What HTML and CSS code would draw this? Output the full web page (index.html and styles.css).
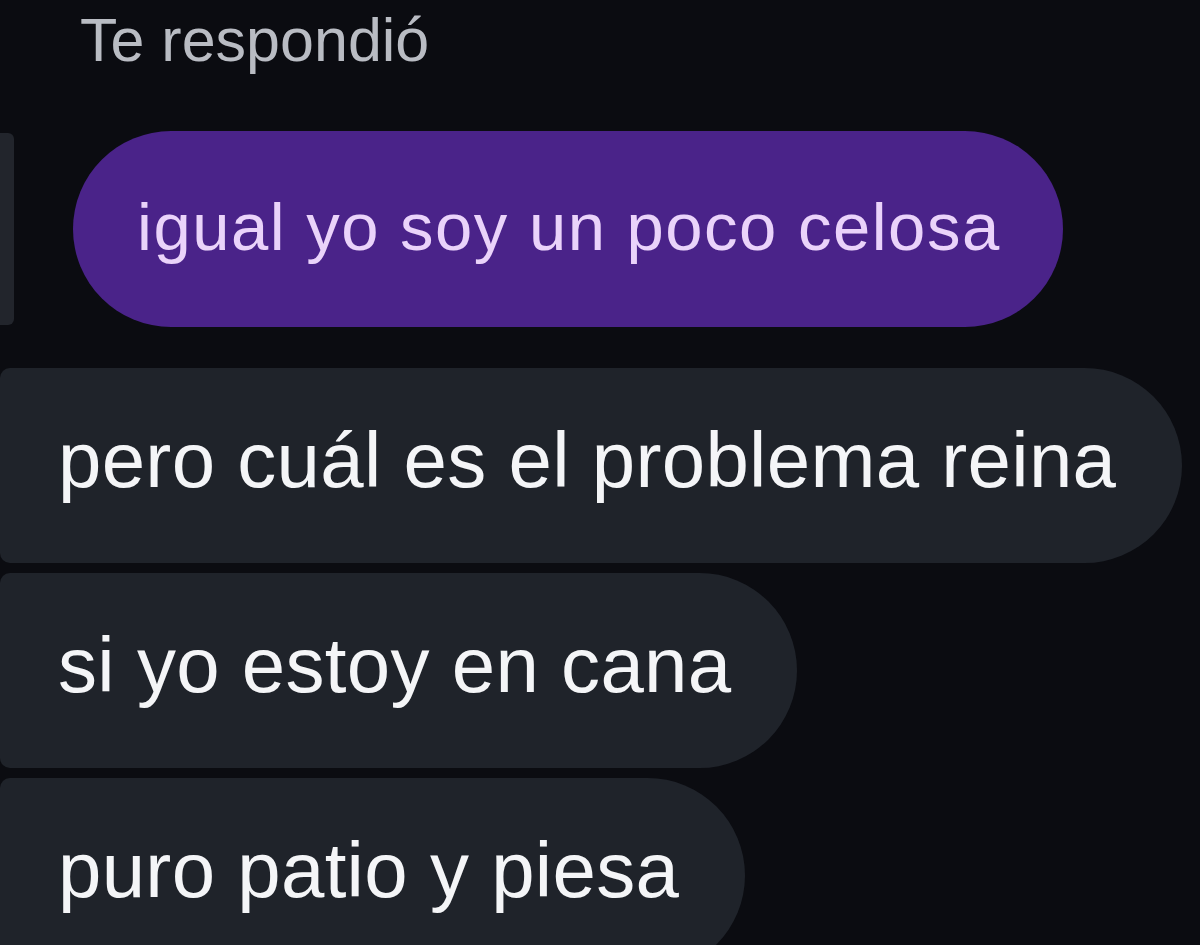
FILE: index.html
```html
<!DOCTYPE html>
<html lang="es">
<head>
    <meta charset="UTF-8">
    <meta name="viewport" content="width=device-width, initial-scale=1.0">
    <title>Te respondió</title>
    <link rel="stylesheet" href="styles.css">
</head>
<body>
    <div class="chat">
        <div class="reply-label">Te respondió</div>

        <div class="reply-row">
            <div class="reply-bar"></div>
            <div class="bubble-mine">igual yo soy un poco celosa</div>
        </div>

        <div class="thread">
            <div class="bubble-theirs">pero cuál es el problema reina</div>
            <div class="bubble-theirs">si yo estoy en cana</div>
            <div class="bubble-theirs">puro patio y piesa</div>
        </div>
    </div>
</body>
</html>
```

FILE: styles.css
```css
html, body {
    margin: 0;
    padding: 0;
    height: 100%;
    overflow: hidden;
}
body {
    font-family: "Liberation Sans", Arial, sans-serif;
    background-color: #0b0c11;
}
.chat {
    display: flex;
    flex-direction: column;
}
.reply-label {
    padding: 10px 0 0 80px;
    font-size: 61px;
    line-height: 61px;
    color: #b9bcc3;
}
.reply-row {
    display: flex;
    align-items: center;
    margin-top: 60px;
}
.reply-bar {
    width: 14px;
    height: 192px;
    background-color: #22252c;
    border-radius: 0 6px 6px 0;
}
.bubble-mine {
    display: flex;
    align-items: center;
    box-sizing: border-box;
    height: 196px;
    margin-left: 59px;
    padding: 0 62px 6px 64px;
    background-color: #4a2389;
    color: #ead3fa;
    font-size: 67px;
    letter-spacing: 1.5px;
    border-radius: 98px;
    white-space: nowrap;
}
.thread {
    display: flex;
    flex-direction: column;
    align-items: flex-start;
    gap: 10px;
    margin-top: 41px;
}
.bubble-theirs {
    display: flex;
    align-items: center;
    box-sizing: border-box;
    height: 195px;
    padding: 0 66px 10px 58px;
    background-color: #1f232a;
    color: #f4f5f7;
    font-size: 78px;
    letter-spacing: 0.3px;
    border-radius: 10px 98px 98px 10px;
    white-space: nowrap;
}
```
